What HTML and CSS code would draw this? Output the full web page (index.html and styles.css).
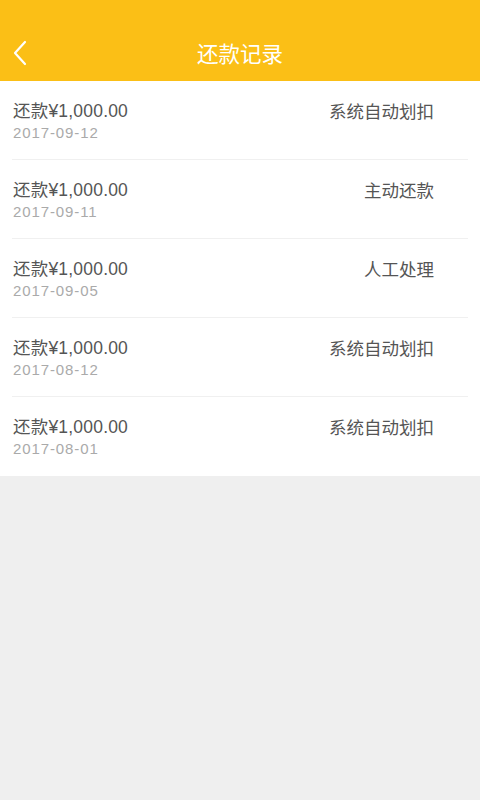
FILE: index.html
```html
<!DOCTYPE html>
<html lang="zh">
<head>
<meta charset="utf-8">
<title>还款记录</title>
<link rel="stylesheet" href="styles.css">
</head>
<body>
<header class="topbar">
  <div class="navbar">
    <span class="back">
      <svg width="14" height="26" viewBox="0 0 14 26"><path d="M12 2 L2 13 L12 24" fill="none" stroke="#fff" stroke-width="2.2" stroke-linecap="round" stroke-linejoin="round"/></svg>
    </span>
    <h1 class="title">还款记录</h1>
  </div>
</header>
<ul class="records">
  <li class="record"><div class="info"><div class="amount">还款¥1,000.00</div><div class="date">2017-09-12</div></div><div class="type">系统自动划扣</div></li>
  <li class="record"><div class="info"><div class="amount">还款¥1,000.00</div><div class="date">2017-09-11</div></div><div class="type">主动还款</div></li>
  <li class="record"><div class="info"><div class="amount">还款¥1,000.00</div><div class="date">2017-09-05</div></div><div class="type">人工处理</div></li>
  <li class="record"><div class="info"><div class="amount">还款¥1,000.00</div><div class="date">2017-08-12</div></div><div class="type">系统自动划扣</div></li>
  <li class="record"><div class="info"><div class="amount">还款¥1,000.00</div><div class="date">2017-08-01</div></div><div class="type">系统自动划扣</div></li>
</ul>
</body>
</html>
```
FILE: styles.css
```css
* { box-sizing: border-box; }
html, body { margin: 0; padding: 0; }
body {
  width: 480px;
  min-height: 800px;
  background: #efefef;
  font-family: "Liberation Sans", "Noto Sans CJK SC", sans-serif;
}
.topbar {
  background: #fbbf16;
  height: 81px;
  padding-top: 25px;
}
.navbar {
  height: 56px;
  display: flex;
  align-items: center;
  justify-content: center;
  position: relative;
}
.back {
  position: absolute;
  left: 13px;
  top: 15px;
  display: flex;
}
.title {
  margin: 0;
  font-family: "Noto Sans CJK SC", sans-serif;
  font-size: 21.5px;
  font-weight: 400;
  color: #fff;
  line-height: 28px;
}
.records {
  list-style: none;
  margin: 0;
  padding: 0 12px;
  background: #fff;
}
.record {
  height: 79px;
  display: flex;
  justify-content: space-between;
  align-items: flex-start;
  padding: 19px 34px 0 1px;
  border-bottom: 1px solid #f0f0f0;
}
.record:last-child { border-bottom: none; }
.amount, .type {
  font-size: 17.5px;
  line-height: 22px;
  color: #555;
}
.amount {
  letter-spacing: 0.2px;
}
.type {
  font-family: "Noto Sans CJK SC", sans-serif;
}
.date {
  font-size: 15px;
  line-height: 22px;
  letter-spacing: 0.9px;
  color: #aaa;
}
```
